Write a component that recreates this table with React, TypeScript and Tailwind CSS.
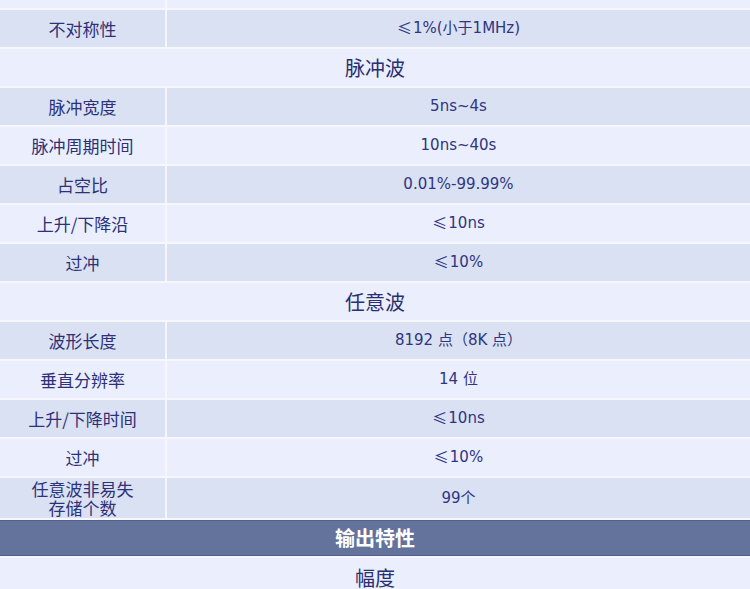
const DARK = 'bg-[#dae1f2]'
const LIGHT = 'bg-[#ebeefd]'

type Row = { label: string[]; value: string; dark: boolean; h?: string }

function Value({ text }: { text: string }) {
  if (!text.startsWith('≤')) return <>{text}</>
  return (
    <>
      <span className="mr-[1px]" style={{ fontFamily: '"Noto Sans CJK SC", sans-serif' }}>
        ≤
      </span>
      {text.slice(1)}
    </>
  )
}

function SpecRow({ label, value, dark, h = 'h-[37px]' }: Row) {
  const bg = dark ? DARK : LIGHT
  return (
    <div className={`grid shrink-0 grid-cols-[165px_1fr] gap-[2px] ${h}`}>
      <div className={`${bg} flex items-center justify-center text-center text-[17px] leading-[19px] text-[#2c3179]`}>
        <p>
          {label.map((l, i) => (
            <span key={l}>
              {i > 0 && <br />}
              {l}
            </span>
          ))}
        </p>
      </div>
      <div
        className={`${bg} flex items-center justify-center text-[15px] text-[#2e3583]`}
        style={{ fontFamily: '"DejaVu Sans", "Noto Sans CJK SC", sans-serif' }}
      >
        <Value text={value} />
      </div>
    </div>
  )
}

function Section({ title }: { title: string }) {
  return (
    <div className={`${LIGHT} flex h-[37px] shrink-0 items-center justify-center text-[20px] text-[#2a2e72]`}>
      {title}
    </div>
  )
}

export default function App() {
  return (
    <div
      className="flex h-[589px] w-[750px] flex-col gap-[2px] overflow-hidden bg-[#f5f7fd]"
      style={{ fontFamily: '"Noto Sans CJK SC", "Noto Sans", sans-serif' }}
    >
      <div className="grid h-[8px] shrink-0 grid-cols-[165px_1fr] gap-[2px]">
        <div className={LIGHT} />
        <div className={LIGHT} />
      </div>
      <SpecRow label={['不对称性']} value="≤1%(小于1MHz)" dark />
      <Section title="脉冲波" />
      <SpecRow label={['脉冲宽度']} value="5ns~4s" dark />
      <SpecRow label={['脉冲周期时间']} value="10ns~40s" dark={false} />
      <SpecRow label={['占空比']} value="0.01%-99.99%" dark />
      <SpecRow label={['上升/下降沿']} value="≤10ns" dark={false} />
      <SpecRow label={['过冲']} value="≤10%" dark />
      <Section title="任意波" />
      <SpecRow label={['波形长度']} value="8192 点（8K 点）" dark />
      <SpecRow label={['垂直分辨率']} value="14 位" dark={false} />
      <SpecRow label={['上升/下降时间']} value="≤10ns" dark />
      <SpecRow label={['过冲']} value="≤10%" dark={false} />
      <SpecRow label={['任意波非易失', '存储个数']} value="99个" dark h="h-[40px]" />
      <div className="flex h-[36px] shrink-0 items-center justify-center border-y border-[#53628b] bg-[#63739b] text-[20px] font-bold text-white">
        输出特性
      </div>
      <div className={`${LIGHT} flex h-[40px] shrink-0 items-center justify-center text-[20px] text-[#2a2e72]`}>
        幅度
      </div>
    </div>
  )
}
